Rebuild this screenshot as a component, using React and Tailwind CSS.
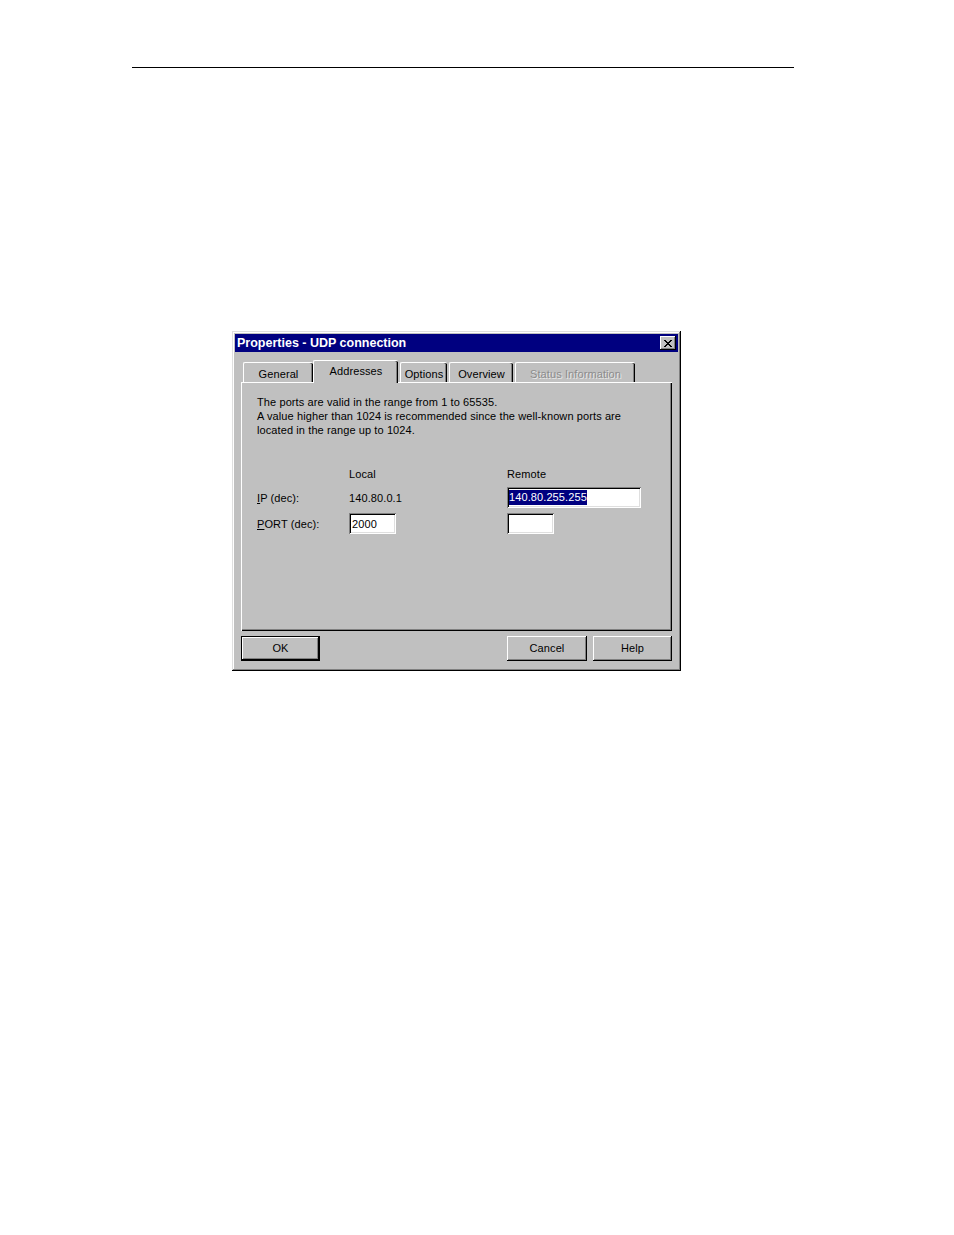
import React from "react";

const font = { fontFamily: '"Liberation Sans", Arial, sans-serif' };

// raised 3d edge used by tabs, buttons and the window
const raised =
  "shadow-[inset_-1px_-1px_#000,inset_1px_1px_#fff,inset_-2px_-2px_#808080]";
const sunken =
  "shadow-[inset_1px_1px_#808080,inset_-1px_-1px_#fff,inset_2px_2px_#000,inset_-2px_-2px_#dfdfdf]";

function Tab({ label, width, selected, disabled, className = "" }) {
  if (selected) {
    return (
      <div
        className={`relative z-10 -mb-px h-[23px] bg-[#c0c0c0] border-t border-l border-white rounded-tl-[2px] rounded-tr-[2px] shadow-[inset_-1px_0_#000,inset_-2px_0_#808080] flex items-start justify-center pt-[3px] ${className}`}
        style={{ width }}
      >
        {label}
      </div>
    );
  }
  return (
    <div
      className={`h-[20px] bg-[#c0c0c0] border-t border-l border-white rounded-tl-[2px] rounded-tr-[2px] shadow-[inset_-1px_0_#000,inset_-2px_0_#808080] flex items-start justify-center pt-[4px] ${className}`}
      style={{ width }}
    >
      {disabled ? (
        <span className="text-[#8c8c8c] [text-shadow:1px_1px_#e8e8e8]">{label}</span>
      ) : (
        label
      )}
    </div>
  );
}

function Button({ children, width, isDefault }) {
  return (
    <div
      className={`h-[25px] flex items-center justify-center bg-[#c0c0c0] pb-px ${
        isDefault
          ? "border border-black shadow-[inset_-1px_-1px_#000,inset_1px_1px_#fff,inset_-2px_-2px_#808080]"
          : raised
      }`}
      style={{ width }}
    >
      {children}
    </div>
  );
}

export default function App() {
  return (
    <div className="min-h-[1235px] bg-white text-black text-[11px] leading-[14px] tracking-[0.1px]" style={font}>
      {/* page rule */}
      <div className="pt-[67px]">
        <div className="ml-[132px] w-[662px] h-px bg-black" />
      </div>

      {/* dialog */}
      <div
        className={`mt-[263px] ml-[232px] w-[449px] h-[340px] bg-[#c0c0c0] p-[3px] flex flex-col shadow-[inset_-1px_-1px_#000,inset_1px_1px_#dfdfdf,inset_-2px_-2px_#808080,inset_2px_2px_#fff]`}
      >
        {/* title bar */}
        <div className="h-[18px] bg-[#000080] flex items-center justify-between pl-[2px] pr-[2px]">
          <span className="text-white font-bold text-[12.5px] tracking-normal">Properties - UDP connection</span>
          <div className={`w-[16px] h-[14px] bg-[#c0c0c0] flex items-center justify-center ${raised}`}>
            <svg width="8" height="7" viewBox="0 0 8 7" shapeRendering="crispEdges">
              <path
                d="M0 0h2v1h-2zM6 0h2v1h-2zM1 1h2v1h-2zM5 1h2v1h-2zM2 2h4v1h-4zM3 3h2v1h-2zM2 4h4v1h-4zM1 5h2v1h-2zM5 5h2v1h-2zM0 6h2v1h-2zM6 6h2v1h-2z"
                fill="#000"
              />
            </svg>
          </div>
        </div>

        {/* tabs */}
        <div className="mt-[8px] ml-[8px] h-[22px] flex items-end">
          <Tab label="General" width={70} />
          <Tab label="Addresses" width={85} selected />
          <Tab label="Options" width={47} className="ml-[2px]" />
          <Tab label="Overview" width={64} className="ml-[2px]" />
          <Tab label="Status Information" width={120} className="ml-[2px]" disabled />
        </div>

        {/* tab page */}
        <div className="ml-[6px] w-[431px] h-[249px] border-t border-l border-white shadow-[inset_-1px_-1px_#000,inset_-2px_-2px_#808080] pl-[15px] pt-[12px]">
          <p>The ports are valid in the range from 1 to 65535.</p>
          <p>A value higher than 1024 is recommended since the well-known ports are</p>
          <p>located in the range up to 1024.</p>

          <div className="mt-[30px] grid grid-cols-[92px_158px_1fr]">
            <div />
            <div>Local</div>
            <div>Remote</div>
          </div>

          <div className="mt-[6px] grid grid-cols-[92px_158px_1fr] items-center h-[20px]">
            <div>
              <span className="underline">I</span>P (dec):
            </div>
            <div>140.80.0.1</div>
            <div className={`w-[134px] h-[21px] bg-white ${sunken} flex items-center pl-[2px]`}>
              <span className="bg-[#000080] text-white leading-[15px]">140.80.255.255</span>
            </div>
          </div>

          <div className="mt-[6px] grid grid-cols-[92px_158px_1fr] items-center h-[20px]">
            <div>
              <span className="underline">P</span>ORT (dec):
            </div>
            <div className={`w-[47px] h-[21px] bg-white ${sunken} flex items-center pl-[3px]`}>2000</div>
            <div className={`w-[47px] h-[21px] bg-white ${sunken}`} />
          </div>
        </div>

        {/* buttons */}
        <div className="mt-[5px] ml-[6px] w-[431px] flex">
          <Button width={79} isDefault>
            OK
          </Button>
          <div className="flex-1" />
          <Button width={80}>Cancel</Button>
          <div className="w-[6px]" />
          <Button width={79}>Help</Button>
        </div>
      </div>
    </div>
  );
}
